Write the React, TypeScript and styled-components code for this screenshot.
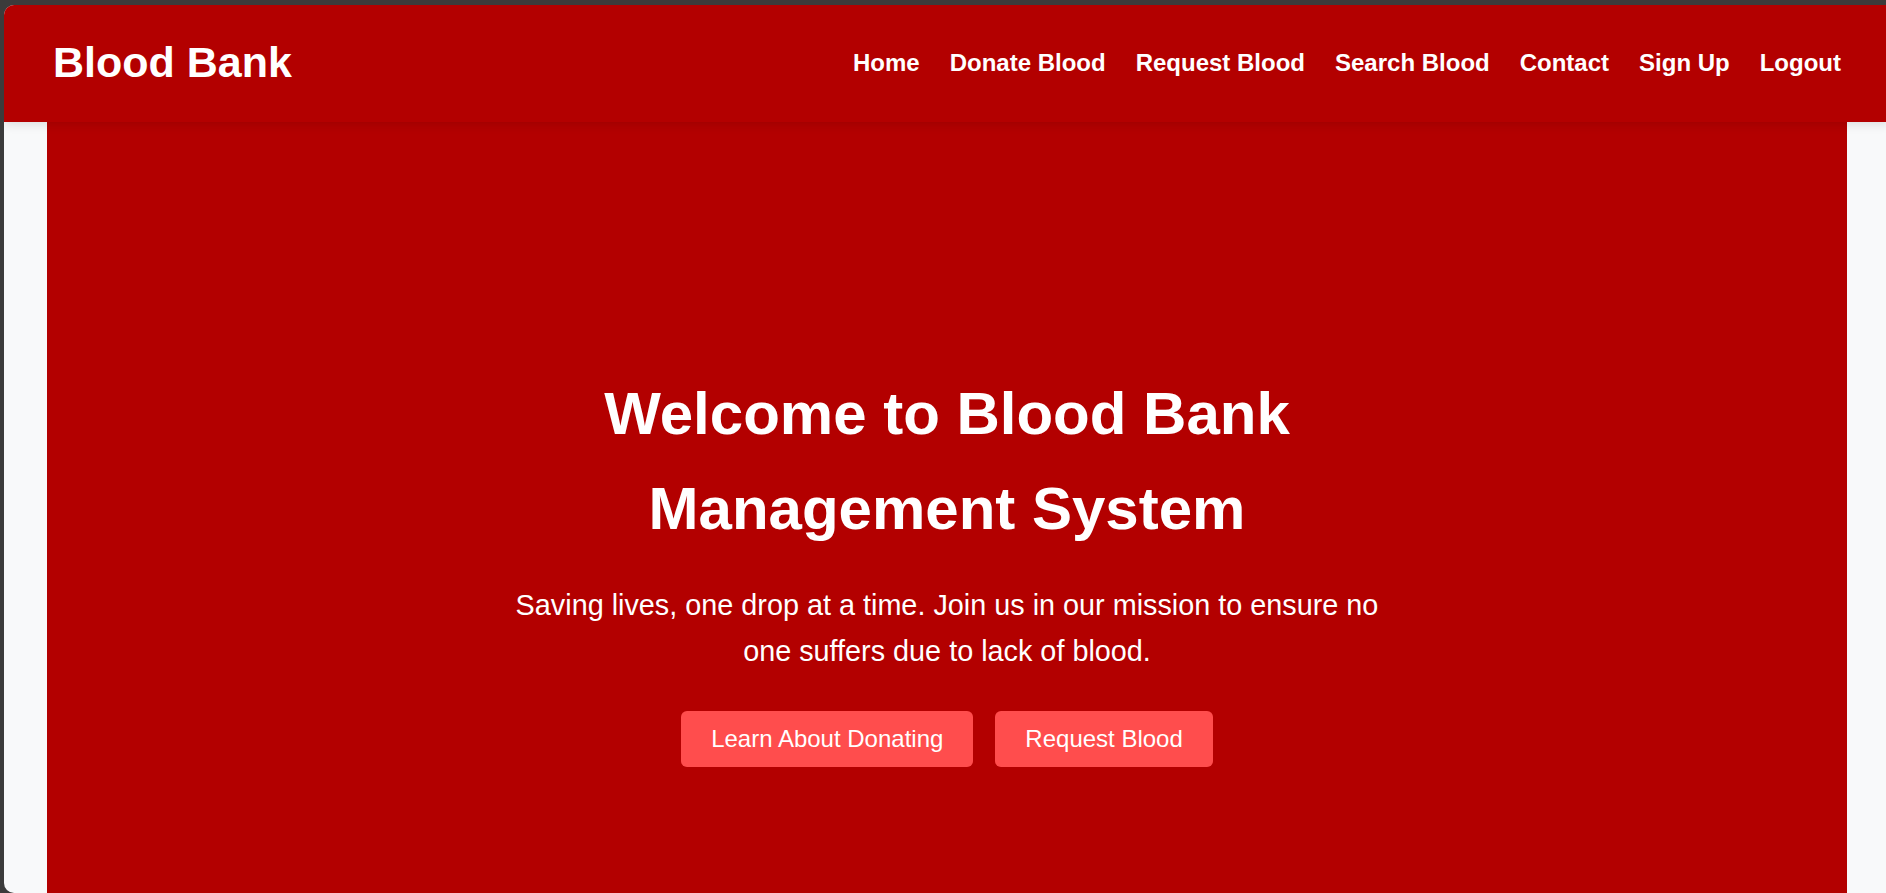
import React from 'react';
import styled, { createGlobalStyle } from 'styled-components';

const GlobalStyle = createGlobalStyle`
    html, body {
        margin: 0;
        padding: 0;
        background: #3b3b3b;
        overflow: hidden;
    }
    * {
        box-sizing: border-box;
    }
`

const Frame = styled.div`
    height: 893px;
    padding: 5px 0 0 4px;
`

const Window = styled.div`
    width: 1886px;
    height: 888px;
    border-radius: 10px 0 0 10px;
    overflow: hidden;
    background: #f8f9fa;
    font-family: "Liberation Sans", Arial, sans-serif;
    display: flex;
    flex-direction: column;
`

const Header = styled.header`
    position: relative;
    z-index: 2;
    height: 117px;
    flex-shrink: 0;
    background: #b30000;
    box-shadow: 0 2px 10px rgba(0, 0, 0, 0.12);
    display: flex;
    align-items: center;
    justify-content: space-between;
    padding: 0 49px 2px;
`

const Logo = styled.div`
    color: #fff;
    font-size: 43px;
    font-weight: 700;
`

const Nav = styled.nav`
    display: flex;
    gap: 30px;
`

const NavLink = styled.a`
    color: #fff;
    font-size: 24px;
    font-weight: 700;
    text-decoration: none;
    cursor: pointer;
`

const Hero = styled.section`
    width: 1800px;
    margin: 0 auto;
    flex: 1;
    background: #b30000;
    display: flex;
    flex-direction: column;
    align-items: center;
    padding-top: 244px;
    text-align: center;
`

const Title = styled.h1`
    margin: 0;
    max-width: 900px;
    color: #fff;
    font-size: 60px;
    line-height: 95px;
    font-weight: 700;
`

const Lead = styled.p`
    margin: 26px 0 0;
    max-width: 900px;
    color: #fff;
    font-size: 28.8px;
    line-height: 46px;
`

const Actions = styled.div`
    display: flex;
    gap: 22px;
    margin-top: 37px;
`

const Button = styled.a`
    background: #ff4d4d;
    color: #fff;
    font-size: 24px;
    line-height: 1.15;
    padding: 14px 30px;
    border-radius: 6px;
    text-decoration: none;
    cursor: pointer;
`

const links = ['Home', 'Donate Blood', 'Request Blood', 'Search Blood', 'Contact', 'Sign Up', 'Logout'];

export default function App() {
    return (
        <>
            <GlobalStyle />
            <Frame>
                <Window>
                    <Header>
                        <Logo>Blood Bank</Logo>
                        <Nav>
                            {links.map(l => <NavLink key={l}>{l}</NavLink>)}
                        </Nav>
                    </Header>
                    <Hero>
                        <Title>Welcome to Blood Bank Management System</Title>
                        <Lead>Saving lives, one drop at a time. Join us in our mission to ensure no one suffers due to lack of blood.</Lead>
                        <Actions>
                            <Button>Learn About Donating</Button>
                            <Button>Request Blood</Button>
                        </Actions>
                    </Hero>
                </Window>
            </Frame>
        </>
    );
}
